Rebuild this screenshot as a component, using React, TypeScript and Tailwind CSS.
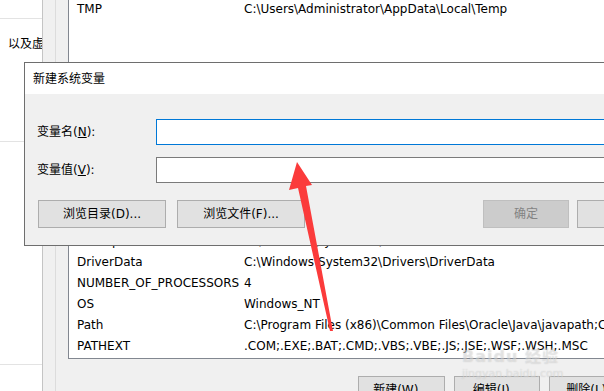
import React from 'react';

const FONT = "font-['DejaVu_Sans','Noto_Sans_CJK_SC',sans-serif]";

const SYS_ROWS = [
  { name: 'ComSpec', value: 'C:\\Windows\\system32\\cmd.exe' },
  { name: 'DriverData', value: 'C:\\Windows\\System32\\Drivers\\DriverData' },
  { name: 'NUMBER_OF_PROCESSORS', value: '4' },
  { name: 'OS', value: 'Windows_NT' },
  { name: 'Path', value: 'C:\\Program Files (x86)\\Common Files\\Oracle\\Java\\javapath;C:...' },
  { name: 'PATHEXT', value: '.COM;.EXE;.BAT;.CMD;.VBS;.VBE;.JS;.JSE;.WSF;.WSH;.MSC' },
];

const Row: React.FC<{ name: string; value: string }> = ({ name, value }) => (
  <div className="flex h-[21px] items-center whitespace-nowrap text-[12px] text-black">
    <span className="w-[175px] shrink-0 pl-[8px]">{name}</span>
    <span>{value}</span>
  </div>
);

const WinButton: React.FC<{ label: string; className?: string; disabled?: boolean }> = ({ label, className = '', disabled }) => (
  <div
    className={`flex h-[28px] shrink-0 items-center justify-center whitespace-nowrap border text-[12px] ${
      disabled ? 'border-[#bfbfbf] bg-[#cccccc] text-[#838383]' : 'border-[#adadad] bg-[#e1e1e1] text-black'
    } ${className}`}
  >
    {label}
  </div>
);

export default function App() {
  return (
    <div className={`relative flex h-[391px] w-[604px] overflow-hidden bg-[#f0f0f0] ${FONT}`}>
      {/* left white panel */}
      <div className="flex w-[42px] shrink-0 flex-col overflow-hidden bg-white">
        <div className="h-[19px] shrink-0 border-b border-[#e3e3e3]" />
        <div className="whitespace-nowrap pt-[16px] pl-[8px] text-[12px] text-black">以及虚拟</div>
        <div className="mt-[88px] h-0 shrink-0 border-b border-[#e3e3e3]" />
        <div className="mt-[222px] h-0 shrink-0 border-b border-[#e3e3e3]" />
      </div>
      <div className="w-[13px] shrink-0 border-l border-[#c4c4c4]" />
      <div className="w-[13px] shrink-0 border-l border-[#dcdcdc]" />

      {/* variables area */}
      <div className="flex flex-1 flex-col">
        <div className="flex h-[359px] shrink-0 flex-col justify-between border-b border-l border-[#828790] bg-white">
          <div className="-mt-[2px]">
            <Row name="TMP" value="C:\Users\Administrator\AppData\Local\Temp" />
          </div>
          <div className="pb-[2px]">
            {SYS_ROWS.map((r) => (
              <Row key={r.name} name={r.name} value={r.value} />
            ))}
          </div>
        </div>
        <div className="flex shrink-0 gap-[9px] pt-[17px] pl-[290px]">
          <WinButton label="新建(W)..." className="w-[87px]" />
          <WinButton label="编辑(I)..." className="w-[86px]" />
          <WinButton label="删除(L)..." className="w-[86px]" />
        </div>
      </div>

      {/* dialog */}
      <div className="absolute top-[62px] left-[24px] flex h-[184px] w-[640px] flex-col border border-[#6e6e6e] bg-[#f0f0f0]">
        <div className="flex h-[31px] shrink-0 items-center bg-white pl-[8px] text-[12px] text-black">新建系统变量</div>
        <div className="flex flex-col pt-[25px] pl-[12px]">
          <div className="flex h-[26px] items-center">
            <span className="w-[119px] text-[12px] text-black">变量名(<u>N</u>):</span>
            <div className="h-[26px] flex-1 border border-[#0078d7] bg-white" />
          </div>
          <div className="mt-[12px] flex h-[26px] items-center">
            <span className="w-[119px] text-[12px] text-black">变量值(<u>V</u>):</span>
            <div className="h-[26px] flex-1 border border-[#7a7a7a] bg-white" />
          </div>
          <div className="mt-[17px] flex items-center pl-[1px]">
            <WinButton label="浏览目录(D)..." className="w-[128px]" />
            <WinButton label="浏览文件(F)..." className="ml-[11px] w-[128px]" />
            <WinButton label="确定" disabled className="ml-[178px] w-[86px]" />
            <WinButton label="取消" className="ml-[8px] w-[86px]" />
          </div>
        </div>
      </div>

      {/* red arrow annotation */}
      <svg className="pointer-events-none absolute top-0 left-0" width="604" height="391" viewBox="0 0 604 391">
        <polygon points="297,162 312,185 306,186 333,331 330,331 298,188 289,190" fill="#fb3b3b" />
      </svg>

      {/* watermark */}
      <div className="pointer-events-none absolute top-[349px] left-[462px] flex flex-col items-start leading-none text-white/40 [text-shadow:0_0_1px_rgba(120,120,120,0.35)]">
        <span className="text-[16px] font-bold tracking-[1px]">Baidu 经验</span>
        <span className="mt-[3px] text-[11px]">jingyan.baidu.com</span>
      </div>
    </div>
  );
}
